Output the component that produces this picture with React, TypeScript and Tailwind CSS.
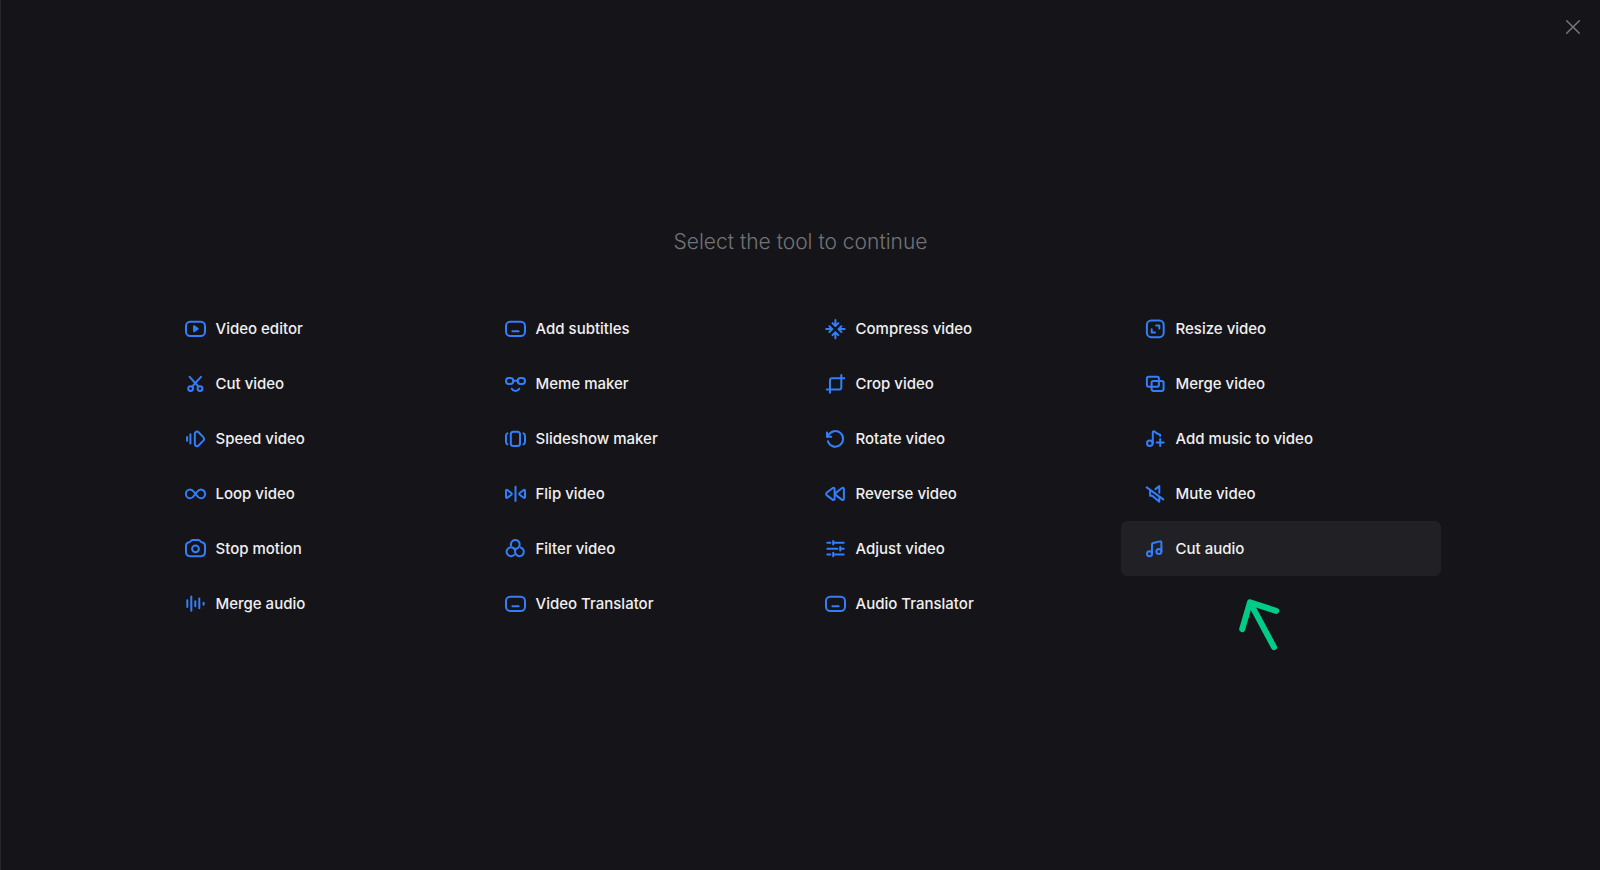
import type { ReactNode } from "react";

interface Tool {
  name: string;
  icon: ReactNode;
  active?: boolean;
}

const subtitlesIcon = (
  <>
    <rect x="1" y="3.7" width="19" height="14.2" rx="4.2" />
    <path d="M7.4 13.2h6.2" />
  </>
);

const tools: Tool[] = [
  {
    name: "Video editor",
    icon: (
      <>
        <rect x="1" y="3.7" width="19" height="14.2" rx="4.2" />
        <path
          d="M8.6 8.2v5.2c0 .5.4.7.8.4l3.7-2.5c.4-.3.4-.7 0-1L9.4 7.8c-.4-.3-.8-.1-.8.4z"
          fill="currentColor"
          strokeWidth="1"
        />
      </>
    ),
  },
  { name: "Add subtitles", icon: subtitlesIcon },
  {
    name: "Compress video",
    icon: (
      <>
        <path d="M10.4 2v5.6M7.5 5.1l2.9 2.9 2.9-2.9" />
        <path d="M10.4 20.2v-5.6M7.5 17.1l2.9-2.9 2.9 2.9" />
        <path d="M1.2 11.1h5.6M4.4 8.2l2.9 2.9L4.4 14" />
        <path d="M19.6 11.1H14M16.4 8.2l-2.9 2.9 2.9 2.9" />
      </>
    ),
  },
  {
    name: "Resize video",
    icon: (
      <>
        <rect x="1.9" y="2.4" width="16.8" height="16.8" rx="4.4" />
        <path d="M11.1 7.4h3.2v3.2M6.7 11.2v3.3h3.3" />
      </>
    ),
  },
  {
    name: "Cut video",
    icon: (
      <>
        <circle cx="5.6" cy="15.6" r="2.4" />
        <circle cx="15" cy="15.6" r="2.4" />
        <path d="M4.6 3.8l8.9 9.8M16 3.8l-8.9 9.8" />
      </>
    ),
  },
  {
    name: "Meme maker",
    icon: (
      <>
        <rect x="1" y="5.1" width="7.3" height="5.9" rx="2.9" />
        <rect x="12.7" y="5.1" width="7.3" height="5.9" rx="2.9" />
        <path d="M8.3 7.8h4.4M6.8 15.7c1.5 2.9 5.9 2.9 7.4 0" />
      </>
    ),
  },
  {
    name: "Crop video",
    icon: (
      <>
        <path d="M5 19.8V7.3c0-1.3.7-2 2-2h12.2" />
        <path d="M16.3 2v12.6c0 1.3-.7 2-2 2H1.8" />
      </>
    ),
  },
  {
    name: "Merge video",
    icon: (
      <>
        <rect x="1.9" y="3.8" width="12" height="10" rx="1.8" />
        <rect x="6.6" y="7.9" width="12" height="10" rx="1.8" />
      </>
    ),
  },
  {
    name: "Speed video",
    icon: (
      <>
        <path d="M2.1 9v3.8M5.4 6.2v9.4" />
        <path d="M9.8 6.2c0-2.7 2.3-3.3 4-1.7l4.3 4.4c1.2 1.2 1.2 2.8 0 4l-4.3 4.4c-1.7 1.6-4 1-4-1.7z" />
      </>
    ),
  },
  {
    name: "Slideshow maker",
    icon: (
      <>
        <rect x="5.8" y="3.7" width="9.2" height="14.4" rx="2.6" />
        <path d="M2.4 5.4C1.3 5.900 1 6.800 1 8v5.800c0 1.200.3 2.100 1.400 2.600M18.500 5.400C19.700 5.900 20 6.800 20 8v5.800c0 1.200-.3 2.100-1.500 2.600" />
      </>
    ),
  },
  {
    name: "Rotate video",
    icon: (
      <>
        <path d="M2.900 13.300a7.800 7.800 0 1 0 .5-6.100L2.200 8.600" />
        <path d="M2 4.600v4.200h4.200" />
      </>
    ),
  },
  {
    name: "Add music to video",
    icon: (
      <>
        <circle cx="4.800" cy="15.200" r="2.800" />
        <path d="M7.800 15.200V4.700c0-1.400 1-1.800 2-1 1.400 1.400 3 2.100 5.300 3v1.200M15.200 10.900v7M11.700 14.400h7" />
      </>
    ),
  },
  {
    name: "Loop video",
    icon: (
      <path d="M10.500 10.900C9 9 7.800 6.500 5.300 6.500a4.400 4.400 0 0 0 0 8.800c2.500 0 3.700-2.500 5.200-4.400s2.700-4.400 5.200-4.400a4.400 4.400 0 0 1 0 8.800c-2.500 0-3.700-2.500-5.200-4.400z" />
    ),
  },
  {
    name: "Flip video",
    icon: (
      <>
        <path d="M10.500 3.700v14.400" />
        <path d="M1 7.700v6.400c0 .9.6 1.200 1.300.7l4-3c.6-.5.6-1.300 0-1.800l-4-3C1.600 6.500 1 6.800 1 7.700z" />
        <path d="M20 7.700v6.400c0 .9-.6 1.200-1.300.7l-4-3c-.6-.5-.6-1.300 0-1.800l4-3c.7-.5 1.300-.2 1.300.7z" />
      </>
    ),
  },
  {
    name: "Reverse video",
    icon: (
      <>
        <path d="M9.600 6.300v9.200c0 1.400-1 1.900-2.100 1.100l-5.600-4.200c-1-.8-1-2.100 0-2.900l5.600-4.300c1.100-.8 2.100-.3 2.100 1.100z" />
        <path d="M18.900 6.300v9.200c0 1.400-1 1.900-2.100 1.100l-5.600-4.200c-1-.8-1-2.100 0-2.900l5.600-4.300c1.100-.8 2.100-.3 2.100 1.100z" />
      </>
    ),
  },
  {
    name: "Mute video",
    icon: (
      <>
        <path d="M1.700 4.400l16.600 12" />
        <path d="M10.400 6.100l3.900-3v6.600M5.100 8.100v4.700h2.100l7.100 5.900v-4.300" />
      </>
    ),
  },
  {
    name: "Stop motion",
    icon: (
      <>
        <path d="M1 8.100c0-2.300 1-3.600 3.200-3.800.7-.1 1-.4 1.400-1 .5-.8 1.100-1.200 2.100-1.200h5.600c1 0 1.600.4 2.100 1.200.4.6.7.9 1.400 1C19 4.500 20 5.800 20 8.100v6c0 2.700-1.300 4.100-4 4.100H5c-2.700 0-4-1.400-4-4.100z" />
        <circle cx="10.500" cy="10.800" r="3.400" />
      </>
    ),
  },
  {
    name: "Filter video",
    icon: (
      <>
        <path d="M6 7.500A4.400 4.400 0 1 1 9.800 10.800" />
        <path d="M9.100 16.900A4.400 4.400 0 1 1 10 11.900" />
        <path d="M15.500 9.500A4.400 4.400 0 1 1 10.800 11.300" />
      </>
    ),
  },
  {
    name: "Adjust video",
    icon: (
      <path d="M2.300 4.700h3M8.200 2.900v3.600M8.200 4.700h10.500M2.300 10.700h10.200M15.200 8.900v3.600M15.200 10.700h3.500M2.300 16.500h3M8.200 14.700v3.600M8.200 16.500h10.500" />
    ),
  },
  {
    name: "Cut audio",
    active: true,
    icon: (
      <>
        <circle cx="4.500" cy="15.800" r="2.500" />
        <circle cx="13.900" cy="13.500" r="2.500" />
        <path d="M7 15.800V6.400c0-.8.4-1.200 1.200-1.400l6.700-1.600c.9-.2 1.500.2 1.500 1.100v9" />
      </>
    ),
  },
  {
    name: "Merge audio",
    icon: (
      <path d="M2.300 7.200v6.800M6.300 3.500v14.200M10.300 8.200v5M14.300 5.600v9.700M18.600 9.700v2" />
    ),
  },
  { name: "Video Translator", icon: subtitlesIcon },
  { name: "Audio Translator", icon: subtitlesIcon },
];

function ToolItem({ tool }: { tool: Tool }) {
  return (
    <li>
      <a
        href="#"
        className={`flex h-[55px] items-center gap-2.5 rounded-md pl-6 text-[15px] font-medium text-[#f0f0f1] hover:bg-[#212125] ${
          tool.active ? "bg-[#212125]" : ""
        }`}
      >
        <svg
          viewBox="0 0 21 21"
          className="size-[21px] shrink-0 overflow-visible text-[#347efb]"
          fill="none"
          stroke="currentColor"
          strokeWidth="2"
          strokeLinecap="round"
          strokeLinejoin="round"
          aria-hidden="true"
        >
          {tool.icon}
        </svg>
        <span className="pt-0.5">{tool.name}</span>
      </a>
    </li>
  );
}

export default function App() {
  return (
    <div className="relative flex min-h-screen flex-col items-center justify-center border-l border-[#25252a] bg-[#151519] pb-[13px] font-['Inter',sans-serif]">
      <button
        type="button"
        aria-label="Close"
        className="absolute top-[15px] right-[15px] flex size-6 items-center justify-center text-[#77777a]"
      >
        <svg
          viewBox="0 0 14 14"
          className="size-3.5"
          fill="none"
          stroke="currentColor"
          strokeWidth="1.5"
          strokeLinecap="round"
          aria-hidden="true"
        >
          <path d="M.7.7l12.600 12.600M13.300.7L.7 13.300" />
        </svg>
      </button>

      <h1 className="mb-[43px] text-[21px] leading-8 font-light text-[#737376]">
        Select the tool to continue
      </h1>

      <ul className="grid w-full max-w-[1280px] grid-cols-4">
        {tools.map((tool) => (
          <ToolItem key={tool.name} tool={tool} />
        ))}
        {/* Pointer towards the highlighted tool */}
        <li className="relative" aria-hidden="true">
          <svg
            viewBox="0 0 42 53"
            className="absolute top-[22px] left-[117px] h-[53px] w-[42px]"
            fill="none"
            stroke="#00cc88"
            strokeWidth="6"
            strokeLinecap="round"
            strokeLinejoin="round"
          >
            <path d="M4.200 31.200L12 4.300l26.200 8.600M12 4.300l24 44.800" />
          </svg>
        </li>
      </ul>
    </div>
  );
}
